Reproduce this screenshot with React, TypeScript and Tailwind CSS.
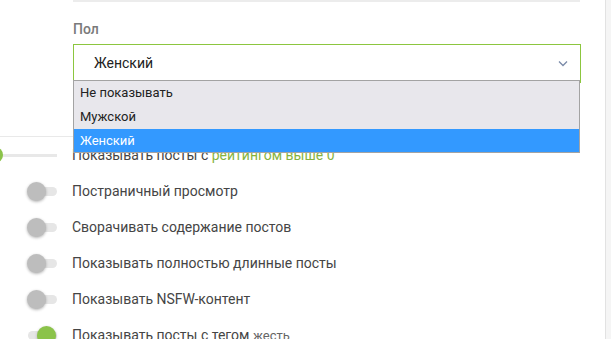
const font = { fontFamily: "Roboto, 'Liberation Sans', sans-serif" };

function Toggle({ on }: { on: boolean }) {
  return (
    <div className="w-[72px] flex items-center">
      <div className="relative ml-[28px] w-[29px] h-[9px] rounded-full bg-[#e6e6e6]">
        {on ? (
          <div className="absolute right-[1px] top-[-5px] w-[19px] h-[19px] rounded-full bg-[#8bc34a] shadow-[0_1px_3px_rgba(0,0,0,0.25)]" />
        ) : (
          <div className="absolute left-[-1px] top-[-5px] w-[19px] h-[19px] rounded-full bg-[#bdbdbd] shadow-[0_1px_3px_rgba(0,0,0,0.3)]" />
        )}
      </div>
    </div>
  );
}

function Row({ on, children }: { on: boolean; children: React.ReactNode }) {
  return (
    <div className="h-[36px] shrink-0 flex items-center">
      <Toggle on={on} />
      <div className="text-[14px] text-[#454545]">{children}</div>
    </div>
  );
}

export default function App() {
  return (
    <div className="w-[611px] h-[339px] overflow-hidden bg-white flex" style={font}>
      <div className="w-[605px] flex flex-col">
        <div className="shrink-0 ml-[73px] w-[507px] h-[2px] bg-[#ececec]" />
        <div className="shrink-0 ml-[73px] mt-[19px] h-[16px] flex items-center text-[14px] font-medium text-[#7a7a7a]">Пол</div>
        <div className="shrink-0 relative z-10 ml-[73px] mt-[7px] w-[508px] h-[39px] border border-[#8cc63f] bg-white flex items-center">
          <span className="pl-[20px] text-[14px] text-[#222]">Женский</span>
          <svg className="absolute right-[12px] top-[15px]" width="10" height="7" viewBox="0 0 10 7">
            <path d="M1 1.5 L5 5.5 L9 1.5" fill="none" stroke="#7a8aa8" strokeWidth="1.3" />
          </svg>
          <div className="absolute left-[-1px] top-[35px] w-[507px] border border-[#a3a3a3] bg-[#e8e7ec] text-[13px] text-[#222]">
            <div className="h-[24px] pl-[6px] flex items-center">Не показывать</div>
            <div className="h-[24px] pl-[6px] flex items-center">Мужской</div>
            <div className="h-[23px] pl-[6px] flex items-center bg-[#3399ff] text-white">Женский</div>
          </div>
        </div>
        <div className="shrink-0 mt-[53px] w-[580px] h-[1px] bg-[#e9e9e9]" />
        <div className="h-[36px] shrink-0 flex items-center">
          <div className="relative w-[72px] h-[16px] flex items-center">
            <div className="w-[57px] h-[3px] bg-[#e8e8e8]" />
            <div className="absolute left-[-13px] top-0 w-[16px] h-[16px] rounded-full bg-[#8bc34a]" />
          </div>
          <div className="text-[14px] text-[#454545]">
            Показывать посты с <span className="text-[#86b33f]">рейтингом выше 0</span>
          </div>
        </div>
        <Row on={false}>Постраничный просмотр</Row>
        <Row on={false}>Сворачивать содержание постов</Row>
        <Row on={false}>Показывать полностью длинные посты</Row>
        <Row on={false}>Показывать NSFW-контент</Row>
        <Row on={true}>
          Показывать посты с тегом <span className="text-[13px] text-[#666]">жесть</span>
        </Row>
      </div>
      <div className="w-[6px] border-l border-[#e2e2e2] bg-[#f5f5f5]" />
    </div>
  );
}
